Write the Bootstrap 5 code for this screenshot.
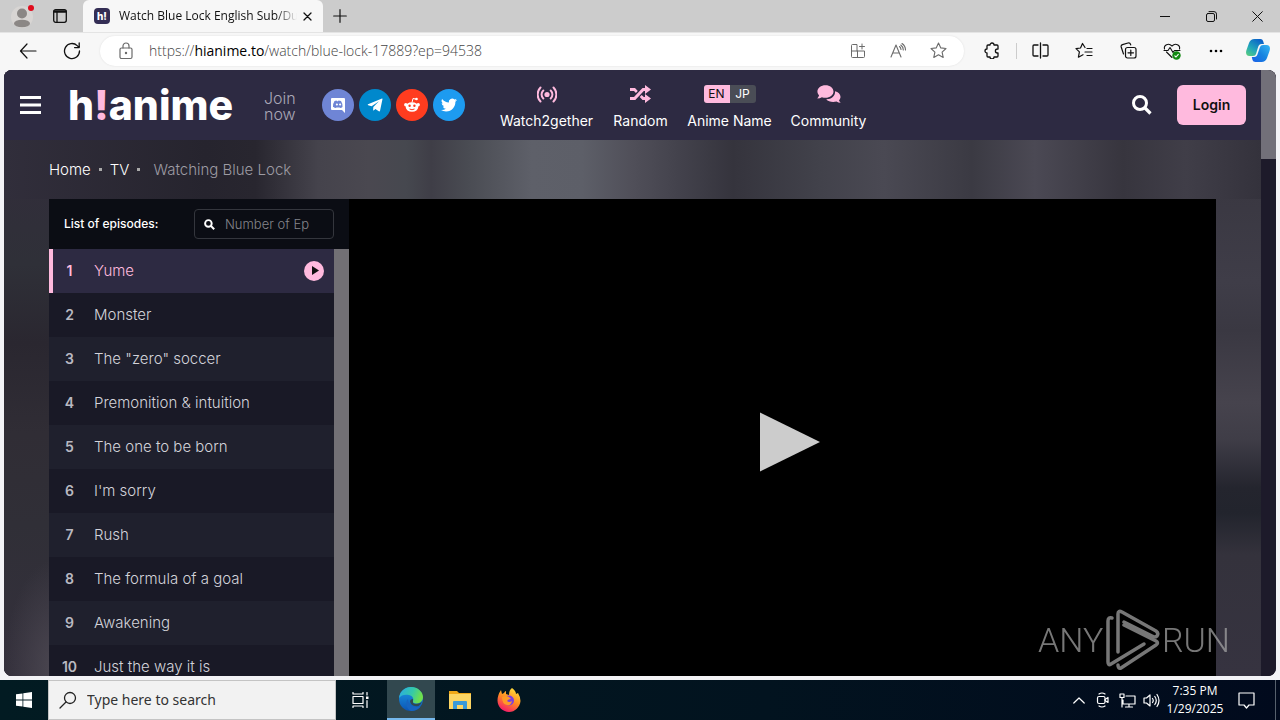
<!DOCTYPE html>
<html lang="en">
<head>
<meta charset="utf-8">
<meta name="viewport" content="width=device-width, initial-scale=1">
<title>Watch Blue Lock English Sub/Dub</title>
<link href="https://cdn.jsdelivr.net/npm/bootstrap@5.3.0/dist/css/bootstrap.min.css" rel="stylesheet">
<style>
  :root { --pink: #ffbade; --navy: #2d2a42; --ui: "Noto Sans", "Open Sans", sans-serif; --site: Inter, "Open Sans", sans-serif; }
  body { font-family: var(--ui); font-size: 14px; line-height: 20px; background: #f3f3f6; color: #111; }
  button { border: 0; background: none; padding: 0; color: inherit; }
  a { color: inherit; text-decoration: none; }
  svg { display: block; flex: none; }
  .ln { fill: none; stroke: currentColor; stroke-linecap: round; stroke-linejoin: round; }

  .tabstrip { height: 32px; background: #ccc; }
  .tab-tools { width: 83px; padding: 0 8px 0 10px; }
  .browser-tab { width: 240px; height: 32px; background: #f7f7f7; border-radius: 6px 6px 0 0; padding: 0 11px; }
  .tab-title { font-family: "Open Sans", sans-serif; font-size: 12px; width: 178px; margin-left: 9px; -webkit-mask-image: linear-gradient(90deg, #000 88%, transparent); mask-image: linear-gradient(90deg, #000 88%, transparent); }
  .new-tab { margin-left: 10px; }
  .win-btn { width: 46px; height: 32px; }
  .toolbar { height: 38px; background: #f7f7f7; border-top: 1px solid #e4e4e4; padding: 0 2px 2px 6px; }
  .tool { width: 44px; height: 30px; }
  .address { height: 30px; background: #fff; border-radius: 15px; margin: 0 6px; padding: 0 6px 0 18px; box-shadow: 0 0 2px #ddd; color: #6b6b6b; }
  .address .tool { width: 40px; }
  .url { margin-left: 15px; font-family: "Open Sans", sans-serif; font-weight: 300; color: #444; }
  .url span { font-weight: 400; color: #000; }
  .split { width: 1px; height: 16px; background: #ccc; margin: 0 1px 0 2px; }
  .copilot { width: 40px; }

  .page-view { margin: 0 4px 4px; border-radius: 8px; min-height: 0; background: #1d1a2a; }
  .scroll-track { width: 15px; background: #1d1a2a; }
  .page-thumb { height: 89px; background: #727079; }
  .site { font-family: var(--site); color: #fff; min-width: 0;
    background:
      radial-gradient(50px 110px at 50px 600px, #4a4650, transparent) left / 45px 100% no-repeat,
      linear-gradient(#312e3a 20%, #2f3038 32%, #2a2730 45%, #302d35 60%, #302f37 75%, #34303c) left / 45px 100% no-repeat,
      linear-gradient(#3a3842 20%, #3f3d48 35%, #3a3842 43%, #46434d 55%, #3f3d47 61%, #24252e 69%, #22242d 73%, #34323c 80%, #363340) #34313c; }
  .site-header { height: 70px; background: var(--navy); padding: 0 15px 0 16px; }
  .brand { font-size: 41px; line-height: 48px; font-weight: 800; width: 166px; margin-left: 27px; }
  .brand span { color: var(--pink); }
  .join { width: 38px; margin-left: 30px; padding-top: 2px; font-size: 16px; line-height: 16px; font-weight: 300; color: #aaa7b6; }
  .socials { margin-left: 20px; gap: 5px; }
  .socials a { width: 32px; height: 32px; }
  .site-nav { margin-left: 35px; gap: 20px; font-size: 14px; line-height: 18px; }
  .site-nav a { padding-top: 4px; gap: 8px; white-space: nowrap; }
  .glyph { height: 20px; color: var(--pink); }
  .w-a { width: 93px; } .w-b { width: 55px; } .w-c { width: 83px; } .w-d { width: 75px; }
  .lang { font-size: 12px; line-height: 18px; border-radius: 3px; background: #4a4d56; color: #fff; overflow: hidden; }
  .lang span { width: 26px; text-align: center; }
  .lang .on { background: var(--pink); color: #111; }
  .login { width: 69px; height: 40px; border-radius: 6px; background: var(--pink); color: #111; font-weight: 600; font-size: 14px; margin-left: 25px; }
  .crumbs { height: 59px; padding: 0 45px; font-size: 15px; font-weight: 300;
    background: linear-gradient(90deg, #312e3b, #26242e 16%, #28262f 20%, #45434c 25%, #4a4850 29%, #46484f 32%, #3f3e47 34%, #4a4c53 37%, #5e6069 42%, #5d5f68 46%, #504f59 50%, #42414b 54%, #35343d 58%, #42424b 65%, #4a4953 70%, #3b3a43 77%, #4b4954 82%, #37353e 89%, #403e48 94%, #34323c); }
  .crumbs .dot { width: 3px; height: 3px; background: #aaa; }
  .crumbs .here { margin-left: 5px; color: #9d9ba3; }
  .watch { margin: 0 45px; min-height: 0; }
  .episodes { width: 300px; background: #191926; }
  .ep-head { height: 50px; flex: none; background: #0b0d14; padding: 0 15px; font-size: 12px; font-weight: 500; }
  .ep-find { width: 140px; height: 30px; border: 1px solid #34363d; border-radius: 4px; padding: 0 9px; }
  .ep-find input { width: 100%; border: 0; outline: 0; background: none; padding: 0 0 0 10px; color: #fff; font-size: 13px; font-weight: 300; }
  .ep-find input::placeholder { color: #85858b; opacity: 1; }
  .ep { height: 44px; color: #d3d3da; font-size: 15px; font-weight: 300; padding-right: 10px; border-left: 4px solid transparent; flex: none; }
  .ep b { width: 33px; text-align: center; font-weight: 600; font-size: 14px; color: #b9b9c1; margin-right: 8px; }
  .ep:nth-child(odd) { background: #1f202d; border-color: #1f202d; }
  .ep.current { background: var(--navy); border-color: var(--pink); color: var(--pink); }
  .ep.current b { color: var(--pink); }
  .list-bar { width: 15px; background: #727075; }
  .player { background: #000; min-width: 0; }
  .player-stage { height: 486px; }
  .watermark { right: 46px; bottom: 5px; width: 192px; color: #aaa; opacity: .7; font: 300 34px/60px Roboto, sans-serif; pointer-events: none; }

  .taskbar { height: 40px; background: linear-gradient(90deg, #021b22, #02131f 60%, #010a1d); color: #fff; }
  .task { width: 49px; height: 40px; }
  .task.start { width: 48px; }
  .task.view { width: 51px; padding-right: 3px; }
  .task.active { width: 48px; background: #32484f; border-bottom: 2px solid #76b9ed; }
  .task-search { width: 288px; height: 40px; background: #f2f2f2; border: 1px solid #c4c4c4; color: #222; padding: 0 10px; }
  .task-search input { border: 0; outline: 0; background: none; padding: 0 0 0 10px; color: #222; font-size: 14px; }
  .task-search input::placeholder { color: #333; opacity: 1; }
  .tray { width: 24px; height: 40px; }
  .clock { width: 64px; font-family: "Open Sans", sans-serif; font-size: 12px; line-height: 18px; }
  .peek { border-right: 1px solid #56606c; margin-right: 4px; width: 49px; padding-right: 9px; }
</style>
</head>
<body class="vh-100 overflow-hidden d-flex flex-column">

<div class="tabstrip d-flex align-items-center flex-shrink-0">
  <div class="tab-tools d-flex align-items-center justify-content-between">
    <button aria-label="Profile"><svg width="26" height="26" viewBox="0 0 26 26"><circle cx="12" cy="14" r="11" fill="#d8d5d3"/><circle cx="12" cy="10.500" r="5" fill="#8b8785"/><ellipse cx="12" cy="20.500" rx="8" ry="3.800" fill="#8b8785"/><circle cx="21" cy="5" r="3" fill="#e00b1c"/></svg></button>
    <button class="me-2" aria-label="Tab actions"><svg class="ln" width="14" height="14" viewBox="0 0 14 14" stroke-width="1.300"><rect x=".7" y=".7" width="12.600" height="12.600" rx="2"/><path d="M4 3v10"/><path d="M1.500 2.500h11" stroke-width="2.500"/></svg></button>
  </div>
  <div class="browser-tab d-flex align-items-center">
    <svg width="16" height="16" viewBox="0 0 16 16"><rect width="16" height="16" rx="4" fill="#342e55"/><text x="3" y="12" font-family="Inter" font-weight="800" font-size="10" fill="#fff">h!</text></svg>
    <div class="tab-title text-nowrap overflow-hidden">Watch Blue Lock English Sub/Du</div>
    <button class="ms-auto" aria-label="Close tab"><svg class="ln" width="9" height="9" viewBox="0 0 9 9" stroke-width="1.300"><path d="M1 1l7 7M8 1L1 8"/></svg></button>
  </div>
  <button class="new-tab" aria-label="New tab"><svg class="ln" width="14" height="14" viewBox="0 0 14 14" stroke-width="1.200"><path d="M7 .7v12.600M.7 7h12.600"/></svg></button>
  <div class="ms-auto d-flex">
    <button class="win-btn d-flex align-items-center justify-content-center" aria-label="Minimize"><svg class="ln" width="10" height="10"><path d="M0 5.500h10"/></svg></button>
    <button class="win-btn d-flex align-items-center justify-content-center" aria-label="Restore"><svg class="ln" width="11" height="11" viewBox="0 0 11 11"><rect x=".5" y="2.500" width="8" height="8" rx="1.500"/><path d="M3 .6h5a2.500 2.500 0 0 1 2.500 2.500V8"/></svg></button>
    <button class="win-btn d-flex align-items-center justify-content-center" aria-label="Close"><svg class="ln" width="11" height="11" viewBox="0 0 11 11"><path d="M.7.7l9.600 9.600M10.300.7L.7 10.300"/></svg></button>
  </div>
</div>

<div class="toolbar d-flex align-items-center flex-shrink-0">
  <button class="tool d-flex align-items-center justify-content-center" aria-label="Back"><svg class="ln" width="18" height="16" viewBox="0 0 18 16" stroke-width="1.200"><path d="M8 1L1.500 8 8 15M1.500 8H17"/></svg></button>
  <button class="tool d-flex align-items-center justify-content-center" aria-label="Refresh"><svg class="ln" width="18" height="18" viewBox="0 0 18 18" stroke-width="1.300"><path d="M16.500 9a7.500 7.500 0 1 1-2.300-5.400L16 5.400M16.200 1v4.600h-4.600"/></svg></button>
  <div class="address d-flex align-items-center flex-grow-1">
    <svg class="ln" width="16" height="18" viewBox="0 0 16 18" stroke-width="1.200"><rect x="2" y="6" width="12" height="10.500" rx="1.500"/><path d="M5 6V4a3 3 0 0 1 6 0v2"/><circle cx="8" cy="11" r=".6" fill="currentColor"/></svg>
    <div class="url flex-grow-1 text-nowrap">https://<span>hianime.to</span>/watch/blue-lock-17889?ep=94538</div>
    <button class="tool d-flex align-items-center justify-content-center" aria-label="App available"><svg class="ln" width="16" height="16" viewBox="0 0 16 16"><path d="M7 8V1.500H2.500a1 1 0 0 0-1 1v11a1 1 0 0 0 1 1h11a1 1 0 0 0 1-1V8H1.500M7.500 8v6.500M12 1v5M9.500 3.500h5"/></svg></button>
    <button class="tool d-flex align-items-center justify-content-center" aria-label="Read aloud"><svg class="ln" width="17" height="17" viewBox="0 0 17 17" stroke-width="1.100"><path d="M1 15L6 3l5 12M2.800 11h6.400M9.500 4.500a4 4 0 0 1 1.500 3M12 1.500a8 8 0 0 1 3.500 6.500M10.800 3a6 6 0 0 1 2.500 5"/></svg></button>
    <button class="tool d-flex align-items-center justify-content-center" aria-label="Add to favorites"><svg class="ln" width="17" height="17" viewBox="0 0 17 17" stroke-width="1.100"><path d="M8.500 1l2.300 4.900 5.200.6-3.900 3.600 1.100 5.300-4.700-2.700-4.700 2.700 1.100-5.300L1 6.500l5.200-.6z"/></svg></button>
  </div>
  <button class="tool d-flex align-items-center justify-content-center" aria-label="Extensions"><svg class="ln" width="17" height="17" viewBox="0 0 17 17" stroke-width="1.300"><path d="M6 3a2 2 0 0 1 4 0h3a1 1 0 0 1 1 1v3h-.6a2 2 0 0 0 0 4h.6v3a1 1 0 0 1-1 1h-3a2 2 0 0 1-4 0H4a1 1 0 0 1-1-1v-3a2 2 0 0 1 0-4V4a1 1 0 0 1 1-1z"/></svg></button>
  <div class="split"></div>
  <button class="tool d-flex align-items-center justify-content-center" aria-label="Split screen"><svg class="ln" width="17" height="17" viewBox="0 0 17 17" stroke-width="1.300"><path d="M6 3H2a1 1 0 0 0-1 1v9a1 1 0 0 0 1 1h4M11 3h4a1 1 0 0 1 1 1v9a1 1 0 0 1-1 1h-4M8.500 1v15"/></svg></button>
  <button class="tool d-flex align-items-center justify-content-center" aria-label="Favorites"><svg class="ln" width="18" height="17" viewBox="0 0 18 17" stroke-width="1.200"><path d="M10 5.500L7.500 1.500 5.500 6 1 6.600l3.400 3.300-1 5.300 4.600-2.500M12 6.500h5M10 10h7M12 13.500h5"/></svg></button>
  <button class="tool d-flex align-items-center justify-content-center" aria-label="Collections"><svg class="ln" width="17" height="17" viewBox="0 0 17 17" stroke-width="1.200"><rect x="5.500" y="5.500" width="10.500" height="10.500" rx="2"/><path d="M3.500 12L1.200 5a2 2 0 0 1 1.300-2.400L8 1a2 2 0 0 1 2.500 1.300l.2.600M10.800 8v5.500M8 10.800h5.500"/></svg></button>
  <button class="tool d-flex align-items-center justify-content-center" aria-label="Browser essentials"><svg class="ln" width="18" height="18" viewBox="0 0 18 18" stroke-width="1.100"><path d="M1.500 7C.5 3 5.500.5 9 4c3.500-3.500 8.500-1 7.500 3M3.500 10l5.500 5.500M1 8.500h4L7 5.500l3 5 1.500-2H17"/><circle cx="13.500" cy="13.500" r="4.200" fill="#138a13" stroke="none"/><path d="M11.800 13.800l1.200 1.200 2.300-2.700" stroke="#fff"/></svg></button>
  <button class="tool d-flex align-items-center justify-content-center" aria-label="More"><svg width="14" height="4" viewBox="0 0 14 4"><circle cx="2" cy="2" r="1.300"/><circle cx="7" cy="2" r="1.300"/><circle cx="12" cy="2" r="1.300"/></svg></button>
  <button class="copilot d-flex align-items-center justify-content-center" aria-label="Copilot"><svg width="24" height="23" viewBox="0 0 24 23"><defs><linearGradient id="ca" x1="0" y1="1" x2=".7" y2="0"><stop offset="0" stop-color="#5ed178"/><stop offset=".45" stop-color="#22a7ba"/><stop offset="1" stop-color="#0a62c9"/></linearGradient><linearGradient id="cb" x1="0" y1="1" x2="1" y2="0"><stop offset="0" stop-color="#1a5ee8"/><stop offset=".5" stop-color="#1684e0"/><stop offset="1" stop-color="#36b7f4"/></linearGradient></defs><path d="M8.500 0h6q2 0 2.600 2l.9 3h-2.500q-2.500 0-3.400 3L10 15q-.5 2-3 2H3.500C0 17-.5 14 .5 11L3 4Q4.500 0 8.500 0z" fill="url(#ca)"/><path d="M15.500 23h-6Q7 23 6.500 21l-.7-3h2.500q2.500 0 3.300-3L14 8q.6-2 3-2h3.500C24 6 24.500 9 23.500 12L21 19q-1.500 4-5.500 4z" fill="url(#cb)"/></svg></button>
</div>

<main class="page-view flex-grow-1 d-flex overflow-hidden position-relative">
  <div class="site flex-grow-1 d-flex flex-column">
    <header class="site-header d-flex align-items-center flex-shrink-0">
      <button aria-label="Menu"><svg width="21" height="18" viewBox="0 0 21 18" fill="#fff"><path d="M0 0h21v3H0zM0 7.500h21v3H0zM0 15h21v3H0z"/></svg></button>
      <a href="#" class="brand text-nowrap">h<span>!</span>anime</a>
      <div class="join">Join now</div>
      <div class="socials d-flex">
        <a href="#" aria-label="Discord"><svg width="32" height="32" viewBox="0 0 32 32"><circle cx="16" cy="16" r="16" fill="#6f85d5"/><path fill="#fff" fill-rule="evenodd" d="M10 9h12a1 1 0 0 1 1 1v14l-3-3H10a1 1 0 0 1-1-1V10a1 1 0 0 1 1-1zm1.500 9q2 1.500 3 .5h3q1 1 3-.5 0-4-1.500-6l-2.500-.5-.5.700h-1l-.5-.700-2 .5q-1.500 2-1.500 6zm2.300-2.500a1.100 1.100 0 1 0 2.200 0 1.100 1.100 0 0 0-2.200 0zm3.200 0a1.100 1.100 0 1 0 2.200 0 1.100 1.100 0 0 0-2.200 0z"/></svg></a>
        <a href="#" aria-label="Telegram"><svg width="32" height="32" viewBox="0 0 32 32"><circle cx="16" cy="16" r="16" fill="#08c"/><path fill="#fff" d="M23 9.500L9 15.300q-.7.500.2.900l3.400 1.100 7.400-5-5.700 5.600-.2 3.700q.6 0 2.300-1.700l3.400 2.400q1 .5 1.300-.8L23.500 10q0-.7-.5-.5z"/></svg></a>
        <a href="#" aria-label="Reddit"><svg width="32" height="32" viewBox="0 0 32 32"><circle cx="16" cy="16" r="16" fill="#ff3c1f"/><g fill="#fff"><ellipse cx="16" cy="18" rx="6.300" ry="4.800"/><circle cx="9.800" cy="15.800" r="1.700"/><circle cx="22.200" cy="15.800" r="1.700"/><circle cx="20.500" cy="10" r="1.300"/></g><path d="M16 13.500l1-4 3.500.7" stroke="#fff" fill="none"/><circle cx="13.600" cy="16.800" r="1.200" fill="#ff3c1f"/><circle cx="18.400" cy="16.800" r="1.200" fill="#ff3c1f"/><path d="M13.500 20q2.500 1.500 5 0" stroke="#ff3c1f" fill="none"/></svg></a>
        <a href="#" aria-label="Twitter"><svg width="32" height="32" viewBox="0 0 32 32"><circle cx="16" cy="16" r="16" fill="#1d9bf0"/><path fill="#fff" transform="translate(8 8)" d="M5.030 14.500c6.040 0 9.340-5 9.340-9.340v-.42A6.700 6.700 0 0 0 16 3.040a6.600 6.600 0 0 1-1.890.52 3.300 3.300 0 0 0 1.450-1.820 6.500 6.500 0 0 1-2.090.79A3.290 3.290 0 0 0 7.880 5.530 9.320 9.320 0 0 1 1.110 2.100a3.290 3.290 0 0 0 1.020 4.380A3.200 3.200 0 0 1 .64 6.070v.04a3.290 3.290 0 0 0 2.630 3.220 3.200 3.200 0 0 1-1.480.06 3.290 3.290 0 0 0 3.070 2.280A6.600 6.600 0 0 1 0 13.030a9.300 9.300 0 0 0 5.030 1.470"/></svg></a>
      </div>
      <nav class="site-nav d-flex">
        <a href="#" class="w-a d-flex flex-column align-items-center"><span class="glyph d-flex align-items-center"><svg class="ln" width="20" height="17" viewBox="0 0 20 17" stroke-width="2"><circle cx="10" cy="8.500" r="2.600" fill="currentColor" stroke="none"/><path d="M6.300 4.500a5.500 5.500 0 0 0 0 8M13.700 4.500a5.500 5.500 0 0 1 0 8M3.500 1.500a10 10 0 0 0 0 14M16.500 1.500a10 10 0 0 1 0 14"/></svg></span><span>Watch2gether</span></a>
        <a href="#" class="w-b d-flex flex-column align-items-center"><span class="glyph d-flex align-items-center"><svg width="21" height="18" viewBox="0 0 21 18" fill="currentColor"><path d="M0 3h5l2.800 3-1.900 2L4 6H0zM0 12h4l8.500-9H15V0l6 4.500L15 9V6h-1.200L5.300 15H0zM9.700 12l2-2 2.100 2H15V9l6 4.500-6 4.500v-3h-2.500z"/></svg></span><span>Random</span></a>
        <a href="#" class="w-c d-flex flex-column align-items-center"><span class="glyph d-flex align-items-center"><span class="lang d-flex"><span class="on">EN</span><span>JP</span></span></span><span>Anime Name</span></a>
        <a href="#" class="w-d d-flex flex-column align-items-center"><span class="glyph d-flex align-items-center"><svg width="24" height="18" viewBox="0 0 24 18" fill="currentColor"><path d="M16.500 6.500c0 3.600-3.700 6.300-8 6.300-1.300 0-2.500-.2-3.600-.6Q3 13.500.3 13.500q1.500-1.600 1.800-3.200C1 9.200.4 8 .4 6.500.400 2.900 4.100.2 8.500.2s8 2.700 8 6.300z"/><path d="M18 6.200c3.200.8 5.500 2.900 5.500 5.600 0 1.300-.5 2.400-1.500 3.400q.3 1.200 1.700 2.600-2.300 0-4.200-1.300c-4 1.200-8.300 0-10.300-2.300 5 .2 9.300-3.200 8.800-8z"/></svg></span><span>Community</span></a>
      </nav>
      <button class="ms-auto" aria-label="Search"><svg width="20" height="20" viewBox="0 0 20 20" fill="none" stroke="#fff"><circle cx="8" cy="8" r="6.500" stroke-width="3"/><path d="M12.500 12.500l6 6" stroke-width="3.200"/></svg></button>
      <button class="login">Login</button>
    </header>
    <nav class="crumbs d-flex align-items-center flex-shrink-0" aria-label="Breadcrumb">
      <a href="#">Home</a><span class="dot mx-2"></span><a href="#">TV</a><span class="dot mx-2"></span><span class="here">Watching Blue Lock</span>
    </nav>
    <div class="watch d-flex flex-grow-1">
      <aside class="episodes d-flex flex-column flex-shrink-0">
        <div class="ep-head d-flex align-items-center justify-content-between">
          <label for="epno">List of episodes:</label>
          <div class="ep-find d-flex align-items-center">
            <svg width="11" height="11" viewBox="0 0 20 20" fill="none" stroke="#fff"><circle cx="8" cy="8" r="6" stroke-width="3.500"/><path d="M12.500 12.500l6 6" stroke-width="3.800"/></svg>
            <input id="epno" type="text" placeholder="Number of Ep">
          </div>
        </div>
        <div class="d-flex flex-grow-1 overflow-hidden">
          <div class="flex-grow-1 d-flex flex-column overflow-hidden">
            <a href="#" class="ep current d-flex align-items-center"><b>1</b>Yume<svg class="ms-auto" width="20" height="20" viewBox="0 0 20 20"><circle cx="10" cy="10" r="10" fill="#ffbade"/><path d="M8 5l7 4.500L8 14z" fill="#111"/></svg></a>
            <a href="#" class="ep d-flex align-items-center"><b>2</b>Monster</a>
            <a href="#" class="ep d-flex align-items-center"><b>3</b>The "zero" soccer</a>
            <a href="#" class="ep d-flex align-items-center"><b>4</b>Premonition &amp; intuition</a>
            <a href="#" class="ep d-flex align-items-center"><b>5</b>The one to be born</a>
            <a href="#" class="ep d-flex align-items-center"><b>6</b>I'm sorry</a>
            <a href="#" class="ep d-flex align-items-center"><b>7</b>Rush</a>
            <a href="#" class="ep d-flex align-items-center"><b>8</b>The formula of a goal</a>
            <a href="#" class="ep d-flex align-items-center"><b>9</b>Awakening</a>
            <a href="#" class="ep d-flex align-items-center"><b>10</b>Just the way it is</a>
          </div>
          <div class="list-bar"></div>
        </div>
      </aside>
      <section class="player flex-grow-1 overflow-hidden">
        <div class="player-stage d-flex align-items-center justify-content-center">
          <button aria-label="Play"><svg width="75" height="60" viewBox="0 0 75 60"><path d="M15 0.500L75 30 15 59.500z" fill="#ccc"/></svg></button>
        </div>
      </section>
    </div>
  </div>
  <div class="scroll-track flex-shrink-0"><div class="page-thumb"></div></div>
  <div class="watermark position-absolute d-flex align-items-center justify-content-between">
    <span>ANY</span>
    <svg width="54" height="62" viewBox="0 0 54 62" fill="none" stroke="currentColor" stroke-width="3.500" stroke-linejoin="round" stroke-linecap="round"><path d="M6 9q-4-1-4 3v41q0 4 3 2l33-20"/><path d="M12 43V5q0-4 4-2l34 19q3 2 1 5-2 2-5 0L18 13"/><path d="M18 16l32 16q3 2 0 4L15 59q-3 1-3-3"/></svg>
    <span>RUN</span>
  </div>
</main>

<footer class="taskbar d-flex align-items-center flex-shrink-0">
  <button class="task start d-flex align-items-center justify-content-center" aria-label="Start"><svg width="16" height="16" viewBox="0 0 16 16" fill="#fff"><path d="M0 2.300L6.500 1.400v6.200H0zM7.300 1.300L16 0v7.600H7.300zM0 8.400h6.500v6.200L0 13.700zM7.300 8.400H16V16l-8.700-1.300z"/></svg></button>
  <div class="task-search d-flex align-items-center">
    <svg class="ln" width="18" height="18" viewBox="0 0 18 18" stroke-width="1.300"><circle cx="11" cy="7" r="5.500"/><path d="M7 11l-6 6"/></svg>
    <input class="flex-grow-1" type="text" aria-label="Search" placeholder="Type here to search">
  </div>
  <button class="task view d-flex align-items-center justify-content-center" aria-label="Task view"><svg class="ln" width="17" height="16" viewBox="0 0 17 16" stroke-width="1.200"><rect x="1" y="4.500" width="10" height="7"/><path d="M1 .5v1.500h10V.5M1 15.500V14h10v1.500M15 .5v2.500M15 8.500v7"/><path d="M14 4.500h2.500v2.500H14z" fill="#fff" stroke="none"/></svg></button>
  <button class="task active d-flex align-items-center justify-content-center" aria-label="Microsoft Edge"><svg width="24" height="24" viewBox="0 0 24 24"><defs><linearGradient id="ea" x1="0" y1="0" x2="1" y2=".3"><stop offset="0" stop-color="#29a9e8"/><stop offset=".6" stop-color="#35c9a8"/><stop offset="1" stop-color="#6fe04c"/></linearGradient><linearGradient id="eb" x1="0" y1="0" x2="0" y2="1"><stop offset="0" stop-color="#1d9ae5"/><stop offset="1" stop-color="#0b55b5"/></linearGradient></defs><circle cx="12" cy="12" r="12" fill="url(#eb)"/><path d="M0 11C1 4 6 0 12 0c7 0 12 5 12 10 0 4-3 6.500-6.500 6.500-3 0-4-1.200-3.500-2.500 1-2 0-5-4-6C6 7 2 8 0 11z" fill="url(#ea)"/><path d="M9 12c0 5 4 9.500 12.500 7.500C19 23 15 24 12 24 7 22 6 15 9 12z" fill="#1764bf"/><path d="M14 14q-1 4 6 2.500 2-.500 3-2-1 3-3.500 4.500-8 1-8.500-5 .5-1.800 3-2z" fill="#32484f"/></svg></button>
  <button class="task d-flex align-items-center justify-content-center" aria-label="File Explorer"><svg width="22" height="18" viewBox="0 0 22 18"><path d="M0 0h8l2 2h12v15H0z" fill="#f0a817"/><path d="M0 3h22v15H0z" fill="#fcd563"/><path d="M4 18V11q0-1 1-1h12q1 0 1 1v7h-4v-4H8v4z" fill="#3a9ad8"/></svg></button>
  <button class="task d-flex align-items-center justify-content-center" aria-label="Firefox"><svg width="24" height="24" viewBox="0 0 24 24"><defs><linearGradient id="fa" x1=".8" y1="0" x2=".3" y2="1"><stop offset="0" stop-color="#ffe43d"/><stop offset=".5" stop-color="#ff8c22"/><stop offset="1" stop-color="#f5156c"/></linearGradient></defs><path d="M15 0q4 3 4 6l2-1q2 3 2.500 8C23 19 18 24 12 24S.500 19 .500 12.500Q.500 7 4 2l1 4 2-1q1-2 2-2v3l3 1q0-5 3-7z" fill="url(#fa)"/><circle cx="12" cy="12.500" r="5" fill="#7b3fe0"/><path d="M5 9q4-2 7 0l2 2q-3 0-4 2 2 2 5 0-1 5-5 4-5-1-5-8z" fill="#ff9a26"/></svg></button>
  <div class="ms-auto d-flex align-items-center">
    <button class="tray d-flex align-items-center justify-content-center" aria-label="Show hidden icons"><svg class="ln" width="12" height="7" viewBox="0 0 12 7" stroke-width="1.200"><path d="M.8 6L6 1l5.200 5"/></svg></button>
    <button class="tray d-flex align-items-center justify-content-center" aria-label="Meet now"><svg class="ln" width="14" height="16" viewBox="0 0 14 16" stroke-width="1.200"><rect x="1.500" y="4.500" width="7.500" height="7" rx="1.500"/><path d="M9 7.500L12 5.500v5L9 8.500M3 2q3-2 6 0M3 14q3 2 6 0"/></svg></button>
    <button class="tray d-flex align-items-center justify-content-center" aria-label="Network"><svg class="ln" width="17" height="15" viewBox="0 0 17 15" stroke-width="1.200"><path d="M7 3h9v8H4V7M10 11v3M6.500 14h7M1 1h4v3.500H1zM3 4.500V14"/></svg></button>
    <button class="tray d-flex align-items-center justify-content-center" aria-label="Volume"><svg class="ln" width="17" height="15" viewBox="0 0 17 15" stroke-width="1.200"><path d="M1 5h2.500L7 2v11L3.500 10H1zM9.500 5.500q1.500 2 0 4M11.800 3.500q3 4 0 8M14 1.500q4 6 0 12"/></svg></button>
    <div class="clock text-center text-nowrap"><div>7:35 PM</div><div>1/29/2025</div></div>
    <button class="peek tray d-flex align-items-center justify-content-center" aria-label="Notifications"><svg class="ln" width="17" height="17" viewBox="0 0 17 17" stroke-width="1.200"><path d="M1 1h15v12h-5l-2.500 3L6 13H1z"/></svg></button>
  </div>
</footer>

<script src="https://cdn.jsdelivr.net/npm/bootstrap@5.3.0/dist/js/bootstrap.bundle.min.js"></script>
</body>
</html>
